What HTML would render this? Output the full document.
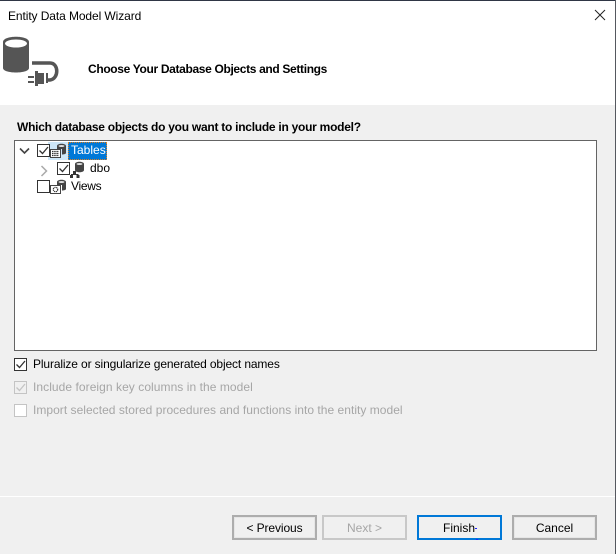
<!DOCTYPE html>
<html><head><meta charset="utf-8">
<style>
html,body{margin:0;padding:0;background:#fff}
body{width:616px;height:554px;position:relative;overflow:hidden;font-family:"Liberation Sans",sans-serif;font-size:12px;color:#000}
.a{position:absolute;white-space:nowrap;line-height:16px}
.btn{position:absolute;top:515px;width:85px;height:25px;box-sizing:border-box;border:2px solid #adadad;background:#f0f0f0;text-align:center;line-height:23px;font-size:12px;box-shadow:inset 0 0 0 1px #e6e6e6}
.cb{position:absolute;width:11px;height:11px;border:1px solid #333;background:#fff}
.cb svg{position:absolute;left:0;top:0}
.cb.d{border-color:#c4c4c4}
</style></head><body>
<div style="position:absolute;left:0;top:105px;width:616px;height:449px;background:#f0f0f0"></div>
<div style="position:absolute;left:0;top:0;width:616px;height:1px;background:#2f3645"></div>
<div style="position:absolute;left:615px;top:0;width:1px;height:554px;background:#55585f"></div>
<div style="position:absolute;left:0;top:496px;width:615px;height:1px;background:#fff"></div>
<div class="a" style="left:8px;top:8px;letter-spacing:-.09px">Entity Data Model Wizard</div>
<svg style="position:absolute;left:594px;top:9px" width="12" height="12"><path d="M1 1L11 11M11 1L1 11" stroke="#222" stroke-width="1" fill="none"/></svg>
<svg style="position:absolute;left:0;top:33px" width="66" height="58">
<path d="M3 9C3 2 29 2 29 9V35C29 41 3 41 3 35Z" fill="#555"/>
<ellipse cx="16" cy="10.500" rx="11" ry="4" fill="#fff"/>
<path d="M32 30H50C59 30 59 46 50 47H46" fill="none" stroke="#555" stroke-width="3.500"/>
<path d="M35 38V53h3v-2h6V40h-6v-2Z" fill="#555"/>
<path d="M46 40h2v10h-2ZM28 43h6v2h-6ZM28 48h6v2h-6Z" fill="#555"/>
</svg>
<div class="a" style="left:88px;top:61px;font-weight:bold;letter-spacing:-.34px">Choose Your Database Objects and Settings</div>
<div class="a" style="left:17px;top:119px;font-weight:bold;letter-spacing:-.26px">Which database objects do you want to include in your model?</div>
<div style="position:absolute;left:14px;top:140px;width:581px;height:209px;border:1px solid #646464;background:#fff"></div>
<div style="position:absolute;left:48px;top:142px;width:20px;height:18px;background:#cde6f7"></div>
<div class="a" style="left:68px;top:142px;width:39px;height:18px;background:#0078d7;color:#fff;outline:1px dotted #e08020;outline-offset:-1px;text-indent:3px;line-height:16px">Tables</div>
<svg style="position:absolute;left:19px;top:147px" width="11" height="8"><path d="M1 1.500L5.500 6L10 1.500" stroke="#444" stroke-width="1.600" fill="none"/></svg>
<svg style="position:absolute;left:40px;top:165px" width="8" height="12"><path d="M1.500 1L6.500 6L1.500 11" stroke="#aaa" stroke-width="1.500" fill="none"/></svg>
<div class="cb" style="left:37px;top:144px"><svg width="11" height="11"><path d="M1.500 5.500L4.500 8.500L10 2" stroke="#333" stroke-width="1.300" fill="none"/></svg></div>
<div class="cb" style="left:57px;top:162px"><svg width="11" height="11"><path d="M1.500 5.500L4.500 8.500L10 2" stroke="#333" stroke-width="1.300" fill="none"/></svg></div>
<div class="cb" style="left:37px;top:180px"></div>
<svg style="position:absolute;left:50px;top:143px" width="18" height="17"><path d="M7 3C7 0 16 0 16 3V10C16 11 14 11.500 12 11.500V6H7Z" fill="#444"/><ellipse cx="11.500" cy="3" rx="3" ry="1" fill="#ddd"/><rect x=".5" y="6.500" width="10" height="8" fill="#fff" stroke="#444"/><path d="M2 8.500h7M2 10.500h7M2 12.500h7" stroke="#333" stroke-width="1.200" stroke-dasharray="1.500 .7"/></svg>
<svg style="position:absolute;left:69px;top:161px" width="17" height="17"><path d="M6 3C6 0 15 0 15 3V9C15 12 6 12 6 9Z" fill="#444"/><ellipse cx="10.500" cy="3" rx="3" ry="1" fill="#ddd"/><path d="M5.500 11V14M2.500 16V13.500H9V16" stroke="#333" fill="none"/><rect x="1" y="14" width="3" height="3" fill="#333"/><rect x="7.500" y="14" width="3" height="3" fill="#333"/><rect x="4" y="10" width="3" height="3" fill="#333"/></svg>
<svg style="position:absolute;left:50px;top:179px" width="18" height="17"><path d="M7 3C7 0 16 0 16 3V10C16 11 14 11.500 12 11.500V6H7Z" fill="#444"/><ellipse cx="11.500" cy="3" rx="3" ry="1" fill="#ddd"/><rect x=".5" y="6.500" width="10" height="8" fill="#fff" stroke="#444"/><circle cx="5.500" cy="10.500" r="2.200" fill="none" stroke="#333" stroke-width="1.200" stroke-dasharray="1.200 .6"/></svg>
<div class="a" style="left:90px;top:160px">dbo</div>
<div class="a" style="left:71px;top:178px;letter-spacing:-.3px">Views</div>
<div class="cb" style="left:14px;top:358px"><svg width="11" height="11"><path d="M1.500 5.500L4.500 8.500L10 2" stroke="#333" stroke-width="1.300" fill="none"/></svg></div>
<div class="cb d" style="left:14px;top:381px;background:#f0f0f0"><svg width="11" height="11"><path d="M1.500 5.500L4.500 8.500L10 2" stroke="#c4c4c4" stroke-width="1.300" fill="none"/></svg></div>
<div class="cb d" style="left:14px;top:404px"></div>
<div class="a" style="left:33px;top:356px;letter-spacing:-.13px">Pluralize or singularize generated object names</div>
<div class="a" style="left:33px;top:379px;color:#a6a6a6;letter-spacing:.06px">Include foreign key columns in the model</div>
<div class="a" style="left:33px;top:402px;color:#a6a6a6;letter-spacing:.03px">Import selected stored procedures and functions into the entity model</div>
<div class="btn" style="left:232px;letter-spacing:-.1px">&lt; Previous</div>
<div class="btn" style="left:322px;border-color:#c8c8c8;color:#a6a6a6;box-shadow:none">Next &gt;</div>
<div class="btn" style="left:417px;border-color:#0078d7;box-shadow:none;text-align:left;padding-left:24px">Finish</div>
<div style="position:absolute;left:475px;top:528px;width:2px;height:1px;background:#22f"></div>
<div style="position:absolute;left:476px;top:539px;width:2px;height:1px;background:#22f"></div>
<div class="btn" style="left:512px">Cancel</div>
</body></html>
